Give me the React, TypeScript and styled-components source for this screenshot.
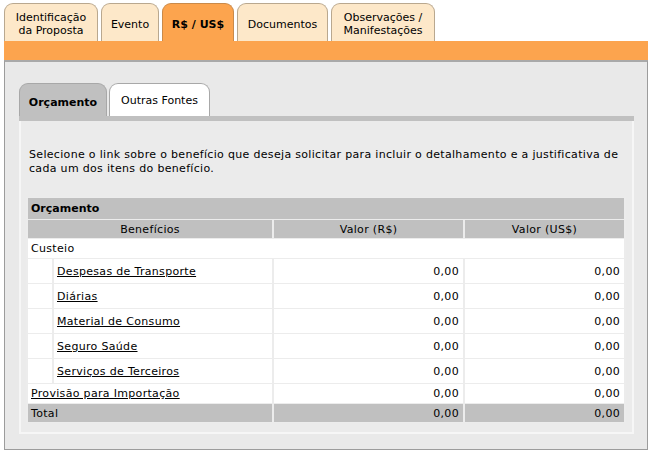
import React from 'react'
import styled, { createGlobalStyle } from 'styled-components'

const orange = '#fca44e'
const peach = '#fde8c9'
const grey = '#c0c0c0'

const Global = createGlobalStyle`
  body {
    margin: 0;
    background: #fff;
    font-family: "DejaVu Sans", Verdana, sans-serif;
    font-size: 11px;
    color: #000;
  }
`

const Page = styled.div`
  width: 652px;
  padding: 3px 4px 0 4px;
  box-sizing: border-box;
`

const TopTabs = styled.div`
  display: flex;
  align-items: flex-end;
  gap: 3px;
`

const TopTab = styled.div<{ active?: boolean; w: number }>`
  width: ${(p) => p.w}px;
  height: 38px;
  box-sizing: border-box;
  display: flex;
  align-items: center;
  justify-content: center;
  text-align: center;
  line-height: 13px;
  background: ${(p) => (p.active ? orange : peach)};
  border: 1px solid ${(p) => (p.active ? '#c98a4a' : '#b9a88f')};
  border-bottom: none;
  border-radius: 9px 9px 0 0;
  font-weight: ${(p) => (p.active ? 'bold' : 'normal')};
  padding-top: 3px;
`

const OrangeBar = styled.div`
  height: 19px;
  background: ${orange};
`

const Panel = styled.div`
  background: #e9e9e9;
  border: 1px solid #9c9c9c;
  border-top: 2px solid #a9a9a9;
  padding: 21px 13px 15px 14px;
`

const InnerTabs = styled.div`
  display: flex;
  align-items: flex-end;
  gap: 2px;
`

const InnerTab = styled.div<{ active?: boolean; w: number }>`
  width: ${(p) => p.w}px;
  height: 33px;
  box-sizing: border-box;
  display: flex;
  align-items: center;
  justify-content: center;
  background: ${(p) => (p.active ? grey : '#fff')};
  border: 1px solid #a8a8a8;
  border-bottom: none;
  border-radius: 9px 9px 0 0;
  font-weight: ${(p) => (p.active ? 'bold' : 'normal')};
  padding-top: ${(p) => (p.active ? '4px' : '0')};
`

const InnerBar = styled.div`
  height: 5px;
  background: ${grey};
`

const InnerBody = styled.div`
  background: #ebebeb;
  border: 2px solid #f6f6f6;
  border-top: none;
  padding: 27px 8px 9px 7px;
  letter-spacing: 0.32px;
`

const Intro = styled.p`
  margin: 0 0 21px 1px;
  line-height: 14px;
`

const Table = styled.table`
  width: 596px;
  border-collapse: separate;
  border-spacing: 2px 1px;
  margin: 0 -2px;
  background: #ececec;
  table-layout: fixed;
`

const Caption = styled.td`
  background: ${grey};
  font-weight: bold;
  height: 21px;
  padding: 0 3px;
  letter-spacing: 0;
`

const Head = styled.td`
  background: ${grey};
  text-align: center;
  height: 18px;
  padding: 0;
`

const Cell = styled.td<{ h?: number; right?: boolean; total?: boolean }>`
  background: ${(p) => (p.total ? grey : '#fff')};
  height: ${(p) => p.h || 24}px;
  padding: 0 3px;
  text-align: ${(p) => (p.right ? 'right' : 'left')};
  padding-right: ${(p) => (p.right ? '4px' : '3px')};
`

const Link = styled.a`
  color: #000;
  text-decoration: underline;
`

const itens = [
  'Despesas de Transporte',
  'Diárias',
  'Material de Consumo',
  'Seguro Saúde',
  'Serviços de Terceiros',
]

const App: React.FC = () => {
  return (
    <Page>
      <Global />
      <TopTabs>
        <TopTab w={94}>
          Identificação
          <br />
          da Proposta
        </TopTab>
        <TopTab w={58}>Evento</TopTab>
        <TopTab w={72} active>
          R$ / US$
        </TopTab>
        <TopTab w={91}>Documentos</TopTab>
        <TopTab w={104}>
          Observações /
          <br />
          Manifestações
        </TopTab>
      </TopTabs>
      <OrangeBar />
      <Panel>
        <InnerTabs>
          <InnerTab w={88} active>
            Orçamento
          </InnerTab>
          <InnerTab w={101}>Outras Fontes</InnerTab>
        </InnerTabs>
        <InnerBar />
        <InnerBody>
          <Intro>
            Selecione o link sobre o benefício que deseja solicitar para incluir o
            detalhamento e a justificativa de cada um dos itens do benefício.
          </Intro>
          <Table>
            <colgroup>
              <col style={{ width: 24 }} />
              <col style={{ width: 218 }} />
              <col style={{ width: 189 }} />
              <col style={{ width: 159 }} />
            </colgroup>
            <tbody>
              <tr>
                <Caption colSpan={4}>Orçamento</Caption>
              </tr>
              <tr>
                <Head colSpan={2}>Benefícios</Head>
                <Head>Valor (R$)</Head>
                <Head>Valor (US$)</Head>
              </tr>
              <tr>
                <Cell colSpan={4} h={19}>
                  Custeio
                </Cell>
              </tr>
              {itens.map((item) => (
                <tr key={item}>
                  <Cell />
                  <Cell>
                    <Link href="#">{item}</Link>
                  </Cell>
                  <Cell right>0,00</Cell>
                  <Cell right>0,00</Cell>
                </tr>
              ))}
              <tr>
                <Cell colSpan={2} h={19}>
                  <Link href="#">Provisão para Importação</Link>
                </Cell>
                <Cell right h={19}>
                  0,00
                </Cell>
                <Cell right h={19}>
                  0,00
                </Cell>
              </tr>
              <tr>
                <Cell colSpan={2} h={18} total>
                  Total
                </Cell>
                <Cell right h={18} total>
                  0,00
                </Cell>
                <Cell right h={18} total>
                  0,00
                </Cell>
              </tr>
            </tbody>
          </Table>
        </InnerBody>
      </Panel>
    </Page>
  )
}

export default App
